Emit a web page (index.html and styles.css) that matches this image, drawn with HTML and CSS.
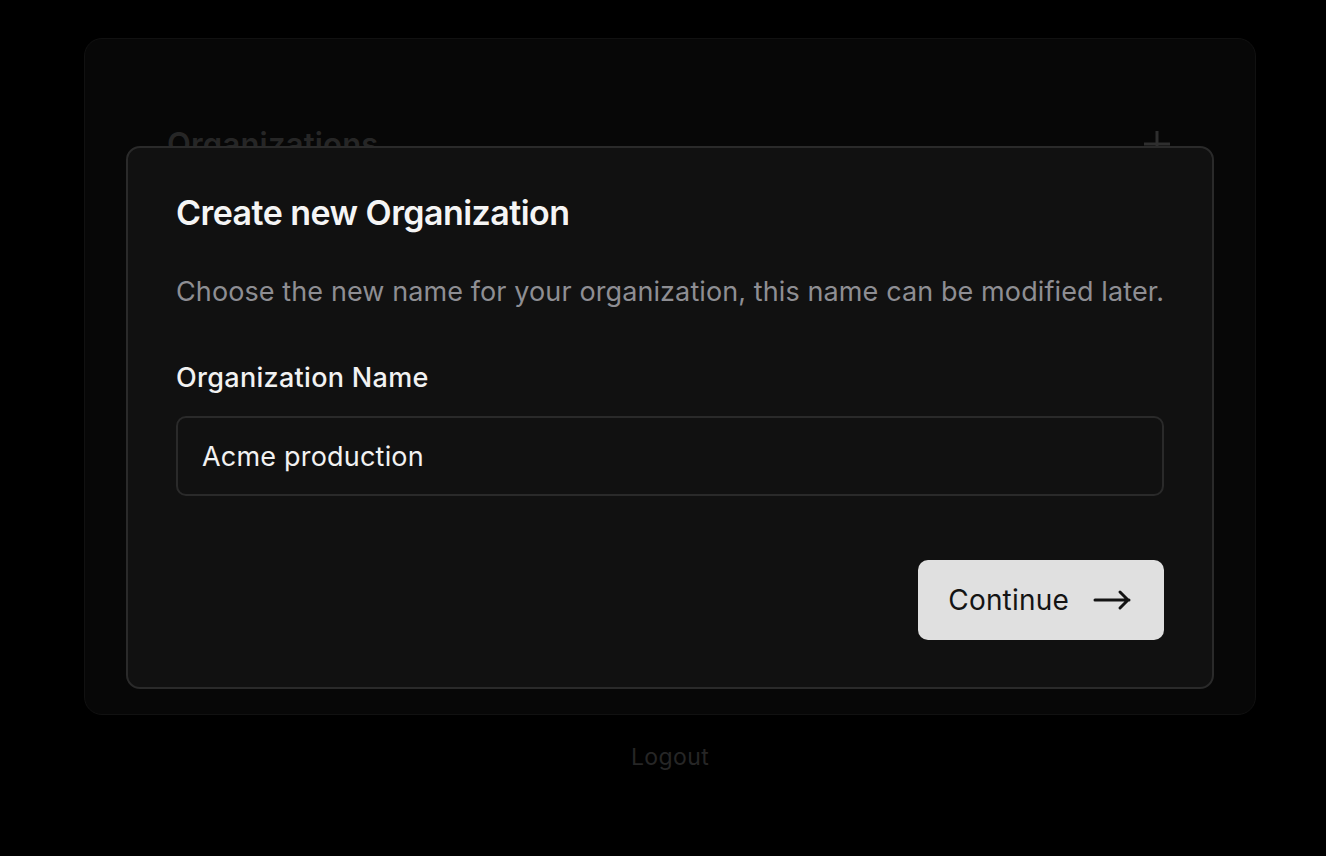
FILE: index.html
```html
<!DOCTYPE html>
<html lang="en">
<head>
<meta charset="utf-8">
<title>Create new Organization</title>
<link rel="stylesheet" href="styles.css">
</head>
<body>
<div class="page">
  <section class="panel">
    <div class="panel-head">
      <h2 class="panel-title">Organizations</h2>
      <svg class="plus" width="26" height="26" viewBox="0 0 26 26"><path d="M13 0v26M0 13h26" stroke="currentColor" stroke-width="3" fill="none"/></svg>
    </div>
  </section>
  <a class="logout" href="#">Logout</a>
</div>
<div class="modal">
  <h1 class="modal-title">Create new Organization</h1>
  <p class="modal-desc">Choose the new name for your organization, this name can be modified later.</p>
  <label class="field-label" for="org">Organization Name</label>
  <input class="field-input" id="org" type="text" value="Acme production">
  <div class="actions">
    <button class="btn-continue">Continue
      <svg class="arrow" width="40" height="22" viewBox="0 0 40 22"><path d="M2 11h34M27 3l8 8-8 8" stroke="currentColor" stroke-width="3" fill="none" stroke-linecap="round" stroke-linejoin="round"/></svg>
    </button>
  </div>
</div>
</body>
</html>
```
FILE: styles.css
```css
* { box-sizing: border-box; }
html, body { margin: 0; padding: 0; }
body {
  background: #000;
  font-family: Inter, "Noto Sans", sans-serif;
  width: 1326px;
  height: 856px;
  overflow: hidden;
}
.page {
  padding-top: 38px;
  padding-left: 84px;
  width: 1256px;
  display: flex;
  flex-direction: column;
  align-items: center;
}
.panel {
  width: 1172px;
  height: 677px;
  border: 1px solid #111;
  background: #070707;
  border-radius: 18px;
  padding: 86px 85px 0 82px;
}
.panel-head {
  display: flex;
  justify-content: space-between;
  align-items: center;
}
.panel-title {
  margin: 0;
  font-size: 31px;
  font-weight: 600;
  letter-spacing: 0.2px;
  color: #262626;
}
.plus { color: #2e2e2e; }
.logout {
  margin-top: 28px;
  font-size: 23px;
  letter-spacing: 0.4px;
  color: #262626;
  text-decoration: none;
}
.modal {
  position: absolute;
  left: 126px;
  top: 146px;
  width: 1088px;
  height: 543px;
  background: #111;
  border: 2px solid #2a2a2a;
  border-radius: 14px;
  padding: 45px 48px 0 48px;
  display: flex;
  flex-direction: column;
}
.modal-title {
  margin: 0;
  font-size: 34px;
  font-weight: 600;
  letter-spacing: -0.55px;
  color: #f5f5f5;
  line-height: 40px;
}
.modal-desc {
  margin: 42px 0 0 0;
  font-size: 27px;
  letter-spacing: 0.1px;
  color: #8e8e93;
  line-height: 34px;
  white-space: nowrap;
}
.field-label {
  margin-top: 52px;
  font-size: 27px;
  font-weight: 500;
  letter-spacing: 0.3px;
  color: #f2f2f2;
  line-height: 34px;
}
.field-input {
  margin-top: 21px;
  height: 80px;
  width: 100%;
  background: #111;
  border: 2px solid #2a2a2a;
  border-radius: 10px;
  padding: 0 24px;
  font-family: inherit;
  font-size: 27px;
  letter-spacing: 0.2px;
  color: #f2f2f2;
  outline: none;
}
.actions {
  margin-top: 64px;
  display: flex;
  justify-content: flex-end;
}
.btn-continue {
  display: flex;
  align-items: center;
  gap: 24px;
  height: 80px;
  padding: 0 31px 0 30px;
  background: #e0e0e0;
  border: none;
  border-radius: 10px;
  font-family: inherit;
  font-size: 28px;
  letter-spacing: 0.2px;
  color: #141414;
}
.arrow { color: #141414; }
```
